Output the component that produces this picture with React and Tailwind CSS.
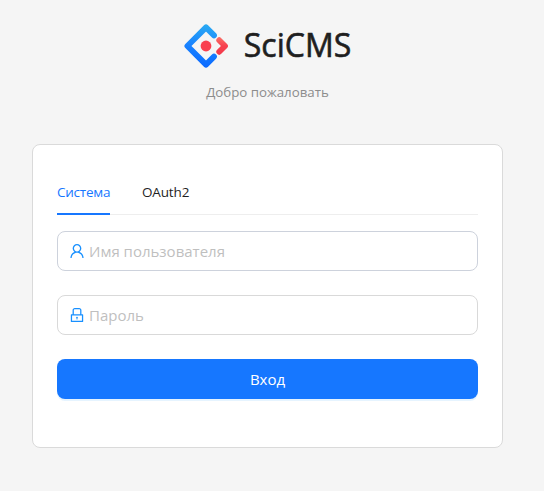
import { AiOutlineUser, AiOutlineLock } from 'react-icons/ai';

function Logo() {
  return (
    <svg width="44" height="44" viewBox="0 0 44 44" fill="none" strokeLinecap="round" strokeLinejoin="round" strokeWidth="5.8">
      <defs>
        <linearGradient id="blue" x1="24" y1="0" x2="18" y2="44" gradientUnits="userSpaceOnUse">
          <stop offset="0" stopColor="#2aabf2" />
          <stop offset="0.5" stopColor="#1a84ff" />
          <stop offset="1" stopColor="#0a68ff" />
        </linearGradient>
        <linearGradient id="red" x1="36" y1="13" x2="36" y2="31" gradientUnits="userSpaceOnUse">
          <stop offset="0" stopColor="#fa7168" />
          <stop offset="0.5" stopColor="#f7404f" />
          <stop offset="1" stopColor="#f23a4b" />
        </linearGradient>
      </defs>
      <path d="M30 11.4 22 3.4 3.4 22 22 40.6 30 32.6" stroke="url(#blue)" />
      <path d="M35.2 16.2 41 22 35.2 27.8" stroke="url(#red)" />
      <circle cx="22" cy="22" r="5.4" className="fill-[#f9404f]" />
    </svg>
  );
}

function Field({ icon: Icon, type, placeholder, className }) {
  return (
    <label className={`flex h-10 items-center rounded-lg border bg-white px-[10px] ${className}`}>
      <Icon className="size-[18px] shrink-0 text-[#1890ff]" />
      <input
        type={type}
        placeholder={placeholder}
        className="ml-[3px] h-6 min-w-0 flex-1 bg-transparent text-[15px] outline-none placeholder:text-[#bfbfbf]"
      />
    </label>
  );
}

export default function App() {
  return (
    <main className="flex h-[491px] w-full flex-col bg-[#f5f5f5] pl-8 font-['Open_Sans','Noto_Sans',sans-serif] text-[#1f1f1f]">
      <header className="flex w-[471px] flex-col items-center pt-6">
        <div className="flex h-11 items-center gap-4">
          <Logo />
          <h1 className="pb-[3px] text-[32px] leading-[44px] font-medium [-webkit-text-stroke:0.6px_#1f1f1f]">SciCMS</h1>
        </div>
        <p className="mt-[13px] text-[13.3px] leading-[22px] text-[#8c8c8c]">Добро пожаловать</p>
      </header>
      <section className="mt-[41px] h-[304px] w-[471px] rounded-lg border border-[#dadada] bg-white px-6 pt-8">
        <nav className="flex h-[38px] gap-8 border-b border-[#eeeeee] text-[13.5px] leading-[22px]">
          <button className="h-[38px] w-[53px] border-b-2 border-[#1677ff] pt-1 pb-[10px] text-left tracking-[-0.25px] whitespace-nowrap text-[#1677ff]">Система</button>
          <button className="h-[38px] pt-1 pb-3 tracking-[-0.15px]">OAuth2</button>
        </nav>
        <form className="mt-4 flex flex-col gap-6">
          <Field icon={AiOutlineUser} type="text" placeholder="Имя пользователя" className="border-[#cdd2dc]" />
          <Field icon={AiOutlineLock} type="password" placeholder="Пароль" className="border-[#d9d9d9]" />
          <button type="button" className="h-10 rounded-lg bg-[#1677ff] text-[15px] leading-6 text-white shadow-[0_2px_0_rgba(5,145,255,0.1)]">Вход</button>
        </form>
      </section>
    </main>
  );
}
